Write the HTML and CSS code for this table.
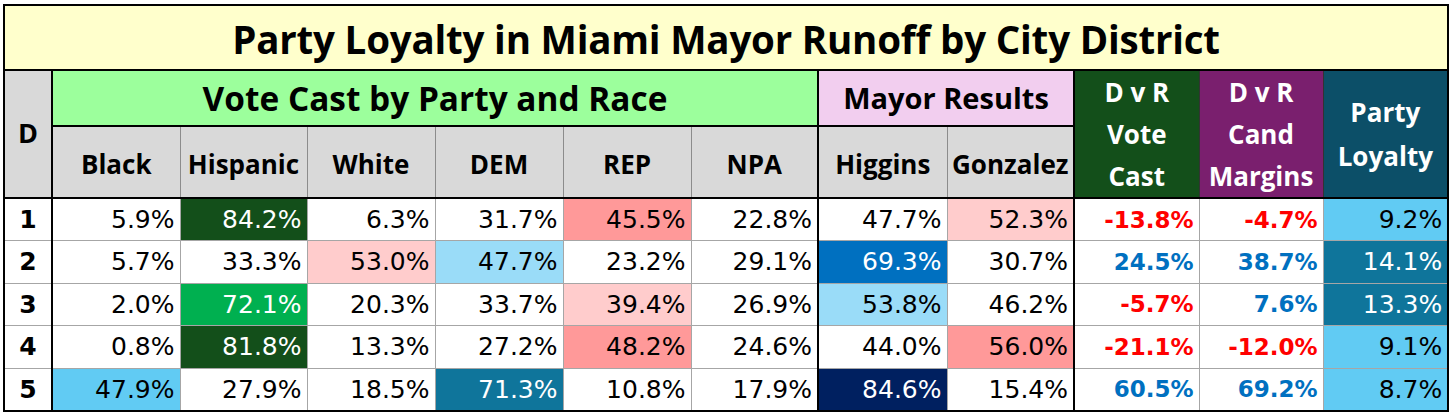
FILE: index.html
```html
<!DOCTYPE html>
<html lang="en">
<head>
<meta charset="utf-8">
<title>Party Loyalty in Miami Mayor Runoff by City District</title>
<link rel="stylesheet" href="styles.css">
</head>
<body>
<table class="sheet">
  <colgroup>
    <col class="c-d">
    <col class="c-128"><col class="c-127"><col class="c-128"><col class="c-128"><col class="c-128"><col class="c-127">
    <col class="c-129"><col class="c-127">
    <col class="c-125"><col class="c-124"><col class="c-125">
  </colgroup>
  <tr class="r-title">
    <th colspan="12" class="title">Party Loyalty in Miami Mayor Runoff by City District</th>
  </tr>
  <tr class="r-h1">
    <th rowspan="2" class="hd-d">D</th>
    <th colspan="6" class="grp g-green thick-l">Vote Cast by Party and Race</th>
    <th colspan="2" class="grp g-pink thick-l">Mayor Results</th>
    <th rowspan="2" class="hx x-green thick-l">D v R<br>Vote<br>Cast</th>
    <th rowspan="2" class="hx x-purple">D v R<br>Cand<br>Margins</th>
    <th rowspan="2" class="hx x-teal">Party<br>Loyalty</th>
  </tr>
  <tr class="r-h2">
    <th class="sub thick-l">Black</th>
    <th class="sub">Hispanic</th>
    <th class="sub">White</th>
    <th class="sub">DEM</th>
    <th class="sub">REP</th>
    <th class="sub">NPA</th>
    <th class="sub thick-l">Higgins</th>
    <th class="sub">Gonzalez</th>
  </tr>
  <tr class="r-data first">
    <td class="num">1</td>
    <td class="thick-l">5.9%</td>
    <td class="bg-dkgreen">84.2%</td>
    <td>6.3%</td>
    <td>31.7%</td>
    <td class="bg-red">45.5%</td>
    <td>22.8%</td>
    <td class="thick-l">47.7%</td>
    <td class="bg-pink">52.3%</td>
    <td class="thick-l neg">-13.8%</td>
    <td class="neg">-4.7%</td>
    <td class="bg-ltblue">9.2%</td>
  </tr>
  <tr class="r-data">
    <td class="num">2</td>
    <td class="thick-l">5.7%</td>
    <td>33.3%</td>
    <td class="bg-pink">53.0%</td>
    <td class="bg-paleblue">47.7%</td>
    <td>23.2%</td>
    <td>29.1%</td>
    <td class="thick-l bg-blue">69.3%</td>
    <td>30.7%</td>
    <td class="thick-l pos">24.5%</td>
    <td class="pos">38.7%</td>
    <td class="bg-teal">14.1%</td>
  </tr>
  <tr class="r-data">
    <td class="num">3</td>
    <td class="thick-l">2.0%</td>
    <td class="bg-green">72.1%</td>
    <td>20.3%</td>
    <td>33.7%</td>
    <td class="bg-pink">39.4%</td>
    <td>26.9%</td>
    <td class="thick-l bg-paleblue">53.8%</td>
    <td>46.2%</td>
    <td class="thick-l neg">-5.7%</td>
    <td class="pos">7.6%</td>
    <td class="bg-teal">13.3%</td>
  </tr>
  <tr class="r-data">
    <td class="num">4</td>
    <td class="thick-l">0.8%</td>
    <td class="bg-dkgreen">81.8%</td>
    <td>13.3%</td>
    <td>27.2%</td>
    <td class="bg-red">48.2%</td>
    <td>24.6%</td>
    <td class="thick-l">44.0%</td>
    <td class="bg-red">56.0%</td>
    <td class="thick-l neg">-21.1%</td>
    <td class="neg">-12.0%</td>
    <td class="bg-ltblue">9.1%</td>
  </tr>
  <tr class="r-data">
    <td class="num">5</td>
    <td class="thick-l bg-ltblue">47.9%</td>
    <td>27.9%</td>
    <td>18.5%</td>
    <td class="bg-teal">71.3%</td>
    <td>10.8%</td>
    <td>17.9%</td>
    <td class="thick-l bg-navy">84.6%</td>
    <td>15.4%</td>
    <td class="thick-l pos">60.5%</td>
    <td class="pos">69.2%</td>
    <td class="bg-ltblue">8.7%</td>
  </tr>
</table>
</body>
</html>
```
FILE: styles.css
```css
html, body {
  margin: 0;
  padding: 0;
  background: #ffffff;
}

body {
  padding: 4px 0 0 3px;
}

.sheet {
  border-collapse: collapse;
  table-layout: fixed;
  width: 1446px;
  border: 2px solid #000;
}

.c-d { width: 48px; }
.c-124 { width: 124px; }
.c-125 { width: 125px; }
.c-127 { width: 127px; }
.c-128 { width: 128px; }
.c-129 { width: 129px; }

th, td {
  padding: 0;
  overflow: hidden;
  white-space: nowrap;
}

th {
  font-family: "Open Sans", "Noto Sans", sans-serif;
  font-weight: 700;
  color: #000;
  text-align: center;
  vertical-align: middle;
}

.r-title { height: 65px; }

.title {
  background: #ffffcc;
  font-size: 38.5px;
  letter-spacing: -0.2px;
  border-bottom: 2px solid #000;
  padding-top: 2px;
}

.r-h1 { height: 55px; }
.r-h2 { height: 71px; }

.hd-d {
  background: #d9d9d9;
  font-size: 27px;
  border-right: 2px solid #000;
  border-bottom: 2px solid #000;
  padding-bottom: 4px;
}

.grp {
  font-size: 33.4px;
  border-bottom: 2px solid #000;
}

.g-green { background: #9cff9c; }
.g-pink { background: #f2ceef; font-size: 29px; }

.hx {
  color: #fff;
  font-size: 26px;
  line-height: 42px;
  border-bottom: 2px solid #000;
  border-right: 1px solid #333;
}

.x-green { background: #134f1a; }
.x-purple { background: #7a1f6e; }
.x-teal { background: #0c4f68; line-height: 44px; }

.sub {
  background: #d9d9d9;
  font-size: 26px;
  border-right: 1px solid #8c8c8c;
  border-bottom: 2px solid #000;
  padding-top: 4px;
}

.thick-l { border-left: 2px solid #000; }

td {
  font-family: "DejaVu Sans", "Liberation Sans", sans-serif;
  font-size: 25px;
  color: #000;
  text-align: right;
  padding-right: 5px;
  vertical-align: middle;
  border-right: 1px solid #a6a6a6;
  border-bottom: 1px solid #a6a6a6;
}

.r-data { height: 42.5px; }

td.num {
  text-align: center;
  padding-right: 0;
  font-weight: 700;
  font-size: 25px;
  border-right: 2px solid #000;
}

td.thick-l { border-left: 2px solid #000; }

.neg { color: #ff0000; font-weight: 700; font-size: 23px; }
.pos { color: #0070c0; font-weight: 700; font-size: 23px; }

.bg-dkgreen { background: #134f1a; color: #fff; }
.bg-green { background: #00b050; color: #fff; }
.bg-red { background: #ff9999; }
.bg-pink { background: #ffcccc; }
.bg-paleblue { background: #9adcf8; }
.bg-ltblue { background: #61cbf3; }
.bg-teal { background: #0f759b; color: #fff; }
.bg-blue { background: #0070c0; color: #fff; }
.bg-navy { background: #002060; color: #fff; }
```
